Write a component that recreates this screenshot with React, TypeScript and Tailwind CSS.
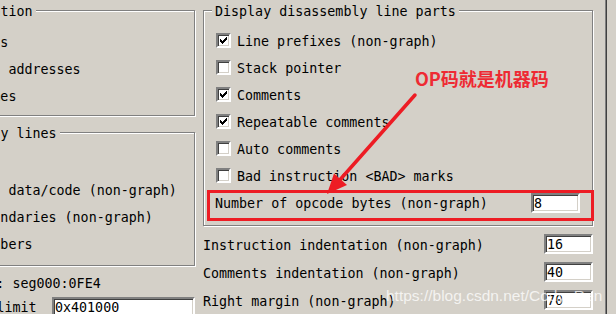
import React from "react";

const BG = "bg-[#d4d0c8]";

function Check({ checked }: { checked?: boolean }) {
  return (
    <div className="relative w-[15px] h-[15px] shrink-0 bg-white border-2 border-t-[#808080] border-l-[#808080] border-b-white border-r-white shadow-[inset_1px_1px_0_#404040,inset_-1px_-1px_0_#d4d0c8]">
      {checked && (
        <svg
          className="absolute left-[-2px] top-[-2px]"
          width="15"
          height="15"
          viewBox="0 0 15 15"
          shapeRendering="crispEdges"
        >
          <rect x="4" y="6" width="1" height="3" fill="#000" />
          <rect x="5" y="7" width="1" height="3" fill="#000" />
          <rect x="6" y="8" width="1" height="3" fill="#000" />
          <rect x="7" y="7" width="1" height="3" fill="#000" />
          <rect x="8" y="6" width="1" height="3" fill="#000" />
          <rect x="9" y="5" width="1" height="3" fill="#000" />
          <rect x="10" y="4" width="1" height="3" fill="#000" />
        </svg>
      )}
    </div>
  );
}

function Input({ value, w }: { value: string; w: string }) {
  return (
    <div
      className={`${w} h-[20px] shrink-0 bg-white border-2 border-t-[#808080] border-l-[#808080] border-b-white border-r-white shadow-[inset_1px_1px_0_#404040,inset_-1px_-1px_0_#d4d0c8] pl-[1px] pt-[1px] flex items-center overflow-hidden`}
    >
      {value}
    </div>
  );
}

function Group({
  title,
  titleLeft,
  className,
  children,
}: {
  title: string;
  titleLeft: string;
  className: string;
  children: React.ReactNode;
}) {
  return (
    <div
      className={`relative border border-[#808080] shadow-[inset_1px_1px_0_#fff,1px_1px_0_#fff] ${className}`}
    >
      <span
        className={`absolute top-[-7px] ${titleLeft} px-[3px] ${BG} leading-[16px] whitespace-nowrap`}
      >
        {title}
      </span>
      {children}
    </div>
  );
}

function LeftRow({ label }: { label: string }) {
  return (
    <div className="h-[27px] flex items-center pl-[18px] gap-[6px] whitespace-nowrap">
      <Check />
      <span>{label}</span>
    </div>
  );
}

function RightRow({ label, checked }: { label: string; checked?: boolean }) {
  return (
    <div className="h-[27px] flex items-center pl-[12px] gap-[6px] whitespace-nowrap">
      <Check checked={checked} />
      <span className="pt-[2px]">{label}</span>
    </div>
  );
}

function FieldRow({ label, value }: { label: string; value: string }) {
  return (
    <div className="h-[28px] flex items-center justify-between whitespace-nowrap">
      <span className="pt-[3px]">{label}</span>
      <Input value={value} w="w-[49px]" />
    </div>
  );
}

export default function App() {
  return (
    <div
      className={`relative w-[616px] h-[314px] overflow-hidden ${BG} text-black font-['DejaVu_Sans_Mono',monospace] text-[13.33px] leading-[16px] flex`}
    >
      {/* Left column (clipped) */}
      <div className="w-[196px] shrink-0 overflow-hidden pt-[10px]">
        <div className="ml-[-160px] w-[356px] flex flex-col">
          <Group
            title="Address representation"
            titleLeft="left-[12px]"
            className="w-[355px] pt-[18px] pb-[5px]"
          >
            <LeftRow label="Function offsets" />
            <LeftRow label="Include segment addresses" />
            <LeftRow label="Use segment names" />
          </Group>
          <Group
            title="Display disassembly lines"
            titleLeft="left-[12px]"
            className="w-[355px] mt-[16px] pt-[17px] pb-[7px]"
          >
            <LeftRow label="Empty lines" />
            <LeftRow label="Borders between data/code (non-graph)" />
            <LeftRow label="Basic block boundaries (non-graph)" />
            <LeftRow label="Source line numbers" />
          </Group>
          <div className="mt-[7px] h-[20px] flex items-center pl-[36px] pt-[1px] whitespace-nowrap">
            Current address: seg000:0FE4
          </div>
          <div className="mt-[4px] h-[20px] flex items-center pl-[4px] whitespace-nowrap">
            <span className="w-[208px] shrink-0 pt-[1px]">Low suspiciousness limit</span>
            <Input value="0x401000" w="w-[143px]" />
          </div>
        </div>
      </div>

      {/* Right column */}
      <div className="ml-[7px] w-[390px] shrink-0 pt-[10px] flex flex-col">
        <Group
          title="Display disassembly line parts"
          titleLeft="left-[8px]"
          className="w-[390px] pt-[16px] pb-[8px]"
        >
          <RightRow label="Line prefixes (non-graph)" checked />
          <RightRow label="Stack pointer" />
          <RightRow label="Comments" checked />
          <RightRow label="Repeatable comments" checked />
          <RightRow label="Auto comments" />
          <RightRow label="Bad instruction <BAD> marks" />
          <div className="h-[28px] flex items-center justify-between pl-[11px] pr-[12px] whitespace-nowrap">
            <span className="pt-[2px]">Number of opcode bytes (non-graph)</span>
            <Input value="8" w="w-[49px]" />
          </div>
        </Group>
        <div className="mt-[4px] flex flex-col">
          <FieldRow label="Instruction indentation (non-graph)" value="16" />
          <FieldRow label="Comments indentation (non-graph)" value="40" />
          <FieldRow label="Right margin (non-graph)" value="70" />
        </div>
      </div>

      {/* Window edge */}
      <div className="ml-[12px] h-full w-[2px] shrink-0 border-l border-[#808080] bg-[#404040]" />

      {/* Annotation overlays */}
      <div className="absolute left-[207px] top-[190px] w-[387px] h-[31px] border-[3px] border-[#ed1c24]" />
      <div className="absolute left-[415px] top-[68px] leading-[20px] text-[18px] font-bold text-[#ee2a33] font-['Noto_Sans_CJK_SC',sans-serif] whitespace-nowrap">
        OP码就是机器码
      </div>
      <svg
        className="absolute left-0 top-0"
        width="616"
        height="314"
        viewBox="0 0 616 314"
      >
        <line
          x1="415"
          y1="95"
          x2="338"
          y2="182"
          stroke="#ed1c24"
          strokeWidth="3.5"
          strokeLinecap="round"
        />
        <polygon points="327,194 334,173.5 347,185" fill="#ed1c24" />
      </svg>
      <div className="absolute left-[386px] top-[287px] leading-[18px] text-[15.5px] text-white/75 font-['Liberation_Sans',Arial,sans-serif] whitespace-nowrap">
        https://blog.csdn.net/Cody_Ren
      </div>
    </div>
  );
}
